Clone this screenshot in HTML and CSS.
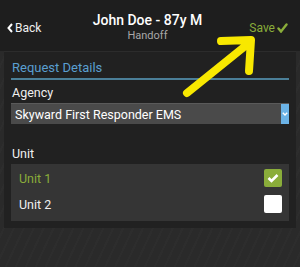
FILE: index.html
```html
<!DOCTYPE html>
<html lang="en">
<head>
  <meta charset="UTF-8"/>
  <title>Handoff</title>
  <link rel="stylesheet" href="styles.css">
</head>
<body>
  <header class="topbar">
    <a class="back" href="#">
      <svg class="back-icon" width="6" height="10" viewBox="0 0 6 10"><path d="M5 1 L1.5 5 L5 9" fill="none" stroke="#fff" stroke-width="2"/></svg>
      Back
    </a>
    <div class="title">
      <h1>John Doe - 87y M</h1>
      <div class="subtitle">Handoff</div>
    </div>
    <a class="save" href="#">
      Save
      <svg width="11" height="10" viewBox="0 0 11 10"><path d="M1.5 5.5 L4 8.5 L9.5 1.5" fill="none" stroke="#8aad3a" stroke-width="2.4" stroke-linecap="round"/></svg>
    </a>
  </header>

  <main class="panel">
    <h2 class="section-title">Request Details</h2>

    <label class="field-label">Agency</label>
    <div class="select">
      <span class="select-text">Skyward First Responder EMS</span>
      <span class="select-arrow">
        <svg width="6" height="4" viewBox="0 0 6 4"><path d="M0.8 0.8 L3 3 L5.2 0.8" fill="none" stroke="#fff" stroke-width="1.4"/></svg>
      </span>
    </div>

    <label class="field-label unit-label">Unit</label>
    <ul class="unit-list">
      <li class="unit selected">
        Unit 1
        <span class="checkbox checked">
          <svg width="12" height="10" viewBox="0 0 12 10"><path d="M1.5 5 L4.5 8 L10.5 2" fill="none" stroke="#fff" stroke-width="2.6"/></svg>
        </span>
      </li>
      <li class="unit">
        Unit 2
        <span class="checkbox"></span>
      </li>
    </ul>
  </main>

  <!-- annotation arrow drawn on top of the screenshot -->
  <svg class="annotation" width="300" height="267" viewBox="0 0 300 267">
    <path d="M187 93 L249 43 M221 41 L251 40 L249 71" fill="none" stroke="#f8e800" stroke-width="8" stroke-linecap="round" stroke-linejoin="round"/>
  </svg>
</body>
</html>
```

FILE: styles.css
```css
* {
  box-sizing: border-box;
  margin: 0;
  padding: 0;
}

body {
  font-family: Roboto, 'Liberation Sans', Arial, sans-serif;
  color: #f0f0f0;
  background-color: #2a2a2a;
  background-image: repeating-linear-gradient(115deg, rgba(255, 255, 255, 0.015) 0 2px, rgba(0, 0, 0, 0) 2px 9px);
  width: 300px;
  height: 267px;
  position: relative;
  overflow: hidden;
}

.topbar {
  height: 51px;
  background: #1e1e1e;
  display: flex;
  align-items: center;
  justify-content: space-between;
  padding: 0 12px 0 7px;
}

.back,
.save {
  display: flex;
  align-items: center;
  gap: 2px;
  font-size: 12px;
  text-decoration: none;
  padding-top: 4px;
  width: 44px;
}

.back {
  color: #f0f0f0;
}

.save {
  color: #8aad3a;
  justify-content: flex-end;
}

.title {
  text-align: center;
  padding-top: 3px;
}

.title h1 {
  font-size: 14px;
  font-weight: 500;
  color: #fff;
  line-height: 17px;
}

.subtitle {
  font-size: 11px;
  color: #a8a8a8;
  line-height: 13px;
}

.panel {
  margin: 0 4px;
  height: 177px;
  background: #212121;
  border-top: 1px solid #2c2c2c;
  padding: 0 7px;
}

.section-title {
  font-size: 13px;
  font-weight: 400;
  color: #5a9fd0;
  line-height: 17px;
  padding-top: 7px;
  padding-bottom: 2px;
  padding-left: 1px;
  border-bottom: 2px solid #4b7f98;
}

.field-label {
  display: block;
  font-size: 12.5px;
  line-height: 15px;
  margin-top: 5px;
  padding-left: 1px;
}

.unit-label {
  margin-top: 22px;
}

.select {
  margin-top: 3px;
  height: 21px;
  background: #4a4a4a;
  border-top: 1px solid #5a5a5a;
  display: flex;
  align-items: center;
  justify-content: space-between;
}

.select-text {
  font-size: 12.5px;
  color: #fff;
  padding-left: 4px;
}

.select-arrow {
  width: 8px;
  height: 100%;
  background: #6bb3e6;
  display: flex;
  align-items: center;
  justify-content: center;
}

.unit-list {
  list-style: none;
  margin-top: 3px;
  height: 57px;
  background: #353535;
  padding: 1px 7px 0 8px;
}

.unit {
  height: 26px;
  display: flex;
  align-items: center;
  justify-content: space-between;
  font-size: 12.5px;
  color: #f0f0f0;
}

.unit.selected {
  color: #8aad3a;
}

.checkbox {
  width: 18px;
  height: 18px;
  border-radius: 2px;
  background: #fff;
  display: flex;
  align-items: center;
  justify-content: center;
}

.checkbox.checked {
  background: #8aad3a;
}

.annotation {
  position: absolute;
  top: 0;
  left: 0;
  pointer-events: none;
}
```
